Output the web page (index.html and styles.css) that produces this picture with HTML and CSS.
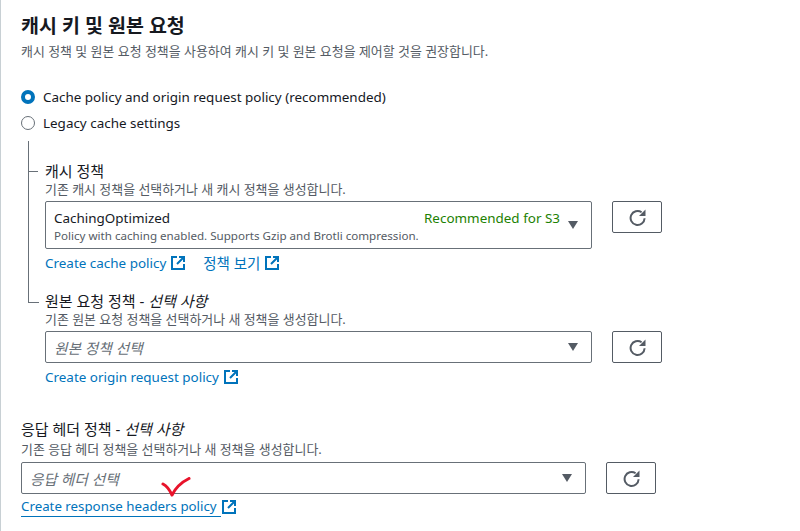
FILE: index.html
```html
<!DOCTYPE html>
<html lang="ko">
<head>
<meta charset="utf-8">
<title>캐시 키 및 원본 요청</title>
<link rel="stylesheet" href="styles.css">
</head>
<body>
<svg class="sprite" width="0" height="0" aria-hidden="true">
  <symbol id="ext" viewBox="0 0 14 14"><path d="M6 1H1v12h12V8" fill="none" stroke="currentColor" stroke-width="2"/><path d="M8 1h5v5M13 1L6 8" fill="none" stroke="currentColor" stroke-width="2"/></symbol>
  <symbol id="refresh" viewBox="0 0 17 17"><path d="M15.600 9.200A7 7 0 1 1 12.600 3.200" fill="none" stroke="currentColor" stroke-width="2"/><path d="M16.500 0.500V7H10z" fill="currentColor"/></symbol>
</svg>
<main class="page">
  <h1 class="title">캐시 키 및 원본 요청</h1>
  <p class="hint title-hint">캐시 정책 및 원본 요청 정책을 사용하여 캐시 키 및 원본 요청을 제어할 것을 권장합니다.</p>

  <div class="radios">
    <label class="radio"><span class="dot dot-on"></span>Cache policy and origin request policy (recommended)</label>
    <label class="radio"><span class="dot"></span>Legacy cache settings</label>
  </div>

  <div class="tree">
    <section class="branch branch-first">
      <h2 class="label">캐시 정책</h2>
      <p class="hint">기존 캐시 정책을 선택하거나 새 캐시 정책을 생성합니다.</p>
      <div class="row">
        <div class="select select-tall">
          <div class="select-body">
            <div class="select-line"><span>CachingOptimized</span><span class="rec">Recommended for S3</span></div>
            <div class="select-desc">Policy with caching enabled. Supports Gzip and Brotli compression.</div>
          </div>
          <span class="caret"></span>
        </div>
        <button class="refresh"><svg class="refresh-icon"><use href="#refresh"/></svg></button>
      </div>
      <div class="links">
        <a class="link">Create cache policy<svg class="ext"><use href="#ext"/></svg></a>
        <a class="link link-ko">정책 보기<svg class="ext"><use href="#ext"/></svg></a>
      </div>
    </section>

    <section class="branch branch-last">
      <h2 class="label">원본 요청 정책 - <i>선택 사항</i></h2>
      <p class="hint">기존 원본 요청 정책을 선택하거나 새 정책을 생성합니다.</p>
      <div class="row">
        <div class="select">
          <div class="select-body placeholder">원본 정책 선택</div>
          <span class="caret"></span>
        </div>
        <button class="refresh"><svg class="refresh-icon"><use href="#refresh"/></svg></button>
      </div>
      <div class="links">
        <a class="link">Create origin request policy<svg class="ext"><use href="#ext"/></svg></a>
      </div>
    </section>
  </div>

  <section class="response">
    <h2 class="label">응답 헤더 정책 - <i>선택 사항</i></h2>
    <p class="hint response-hint">기존 응답 헤더 정책을 선택하거나 새 정책을 생성합니다.</p>
    <div class="row response-row">
      <div class="select select-wide">
        <div class="select-body placeholder">응답 헤더 선택</div>
        <span class="caret"></span>
      </div>
      <button class="refresh"><svg class="refresh-icon"><use href="#refresh"/></svg></button>
    </div>
    <div class="links links-marked">
      <a class="link link-under">Create response headers policy</a><svg class="ext ext-near"><use href="#ext"/></svg>
      <svg class="check" viewBox="0 0 30 20"><path d="M2 7C5 8.500 8 11.500 11 18C14 12 20 5.500 28 1.500" fill="none" stroke="#e8132b" stroke-width="3" stroke-linecap="round" stroke-linejoin="round"/></svg>
    </div>
  </section>
</main>
</body>
</html>
```
FILE: styles.css
```css
* { box-sizing: border-box; }
html, body { margin: 0; height: 100%; }
body {
  background: #fff;
  color: #16191f;
  font-family: "Noto Sans", "Noto Sans CJK KR", sans-serif;
  overflow: hidden;
}
.sprite { position: absolute; }
.page {
  height: 531px;
  border-left: 1px solid #c8d0d4;
  padding: 14px 0 0 20px;
}
.title { margin: 0; font-size: 19.500px; line-height: 24px; font-weight: 700; }
.hint { margin: 0; font-size: 12.950px; line-height: 16px; color: #545b64; }
.title-hint { margin-top: 5px; }
.radios { margin-top: 28px; display: flex; flex-direction: column; gap: 6px; }
.radio { display: flex; align-items: center; gap: 8px; font-size: 13.450px; line-height: 20px; }
.dot { width: 14px; height: 14px; border-radius: 50%; border: 1.500px solid #687078; background: #fff; }
.dot-on { border: 4px solid #0073bb; }
.tree { margin: 8px 0 0 7px; }
.branch { position: relative; }
.branch-first { border-left: 1px solid #687078; padding: 20px 0 18px 16px; }
.branch-first::before { content: ""; position: absolute; left: 0; top: 30px; width: 9px; height: 1px; background: #687078; }
.branch-last { padding-left: 17px; }
.branch-last::before { content: ""; position: absolute; left: 0; top: -10px; width: 10px; height: 21px; border-left: 1px solid #687078; border-bottom: 1px solid #687078; }
.label { margin: 0; font-size: 15px; line-height: 20px; font-weight: 400; }
.row { display: flex; align-items: flex-start; gap: 20px; margin-top: 4px; }
.response-row { margin-top: 5px; }
.select {
  width: 547px; height: 32px; flex: none;
  display: flex; align-items: center;
  border: 1px solid #687078; border-radius: 2px;
  padding: 0 13px 0 8px;
}
.select-wide { width: 565px; }
.select-tall { height: 48px; }
.select-body { flex: 1; min-width: 0; }
.select-line { display: flex; justify-content: space-between; font-size: 13.450px; line-height: 20px; padding-right: 8px; margin-top: 1px; }
.rec { color: #1d8102; }
.select-desc { font-size: 11.600px; line-height: 16px; color: #545b64; }
.placeholder { font-size: 14.700px; font-style: italic; color: #687078; }
.caret { width: 0; height: 0; border: 5.500px solid transparent; border-top: 8px solid #545b64; border-bottom: 0; }
.refresh {
  width: 50px; height: 32px; flex: none; padding: 0;
  display: flex; align-items: center; justify-content: center;
  background: #fff; border: 1px solid #545b64; border-radius: 2px; color: #545b64;
}
.refresh-icon { width: 17px; height: 17px; }
.links { display: flex; align-items: center; gap: 18px; margin-top: 4px; height: 20px; }
.response-row + .links { margin-top: 3px; }
.links-marked { gap: 0; position: relative; }
.link { display: inline-flex; align-items: center; color: #0073bb; font-size: 13.450px; line-height: 20px; }
.link-ko { font-size: 14.500px; }
.link-under { border-bottom: 1px solid #0073bb; font-size: 13.300px; line-height: 19px; height: 20px; padding-right: 4px; }
.ext { width: 14px; height: 14px; margin-left: 5px; color: #0073bb; }
.ext-near { margin-left: 1px; }
.check { position: absolute; left: 140px; top: -20px; width: 30px; height: 20px; }
.response { margin-top: 32px; }
.response-hint { margin-top: 2px; }
```
